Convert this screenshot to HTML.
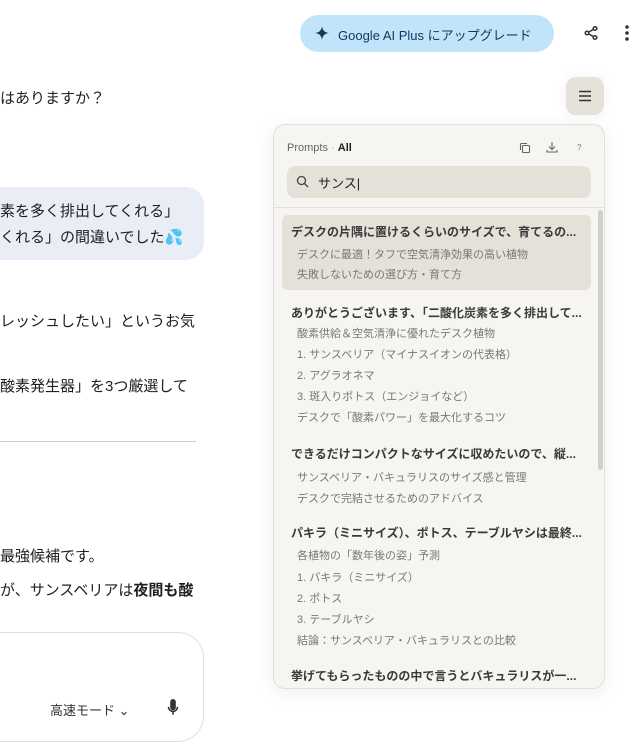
<!DOCTYPE html>
<html><head><meta charset="utf-8"><style>
*{margin:0;padding:0;box-sizing:border-box}
body{width:644px;height:721px;overflow:hidden;background:#fff;font-family:"Liberation Sans","Noto Sans CJK JP",sans-serif;color:#1f1f1f;position:relative}
.a{position:absolute;white-space:nowrap}
.t{font-size:15px;color:#1f1f1f}
.pt{font-size:12px;font-weight:bold;color:#3a3a3a;left:291px}
.ps{font-size:11px;color:#7a7872;left:297px}
</style></head><body>
<div class="a" style="left:300px;top:15px;width:254px;height:37px;border-radius:19px;background:#c2e4fb"></div>
<svg class="a" style="left:314px;top:25px" width="16" height="16" viewBox="0 0 16 16"><path d="M8 1 C8.6 5.5 10.5 7.4 15 8 C10.5 8.6 8.6 10.5 8 15 C7.4 10.5 5.5 8.6 1 8 C5.5 7.4 7.4 5.5 8 1Z" fill="#0b3a5c"/></svg>
<div class="a" style="left:338px;top:25px;font-size:13px;color:#0b3a5c">Google AI Plus にアップグレード</div>
<svg class="a" style="left:583px;top:25px" width="16" height="16" viewBox="0 0 16 16" fill="none" stroke="#333" stroke-width="1.5"><circle cx="12" cy="3.5" r="1.8"/><circle cx="4" cy="8" r="1.8"/><circle cx="12" cy="12.5" r="1.8"/><path d="M5.6 7.1 10.4 4.4M5.6 8.9 10.4 11.6"/></svg>
<svg class="a" style="left:623px;top:24px" width="8" height="18"><circle cx="4" cy="3" r="1.8" fill="#333"/><circle cx="4" cy="9" r="1.8" fill="#333"/><circle cx="4" cy="15" r="1.8" fill="#333"/></svg>

<div class="a t" style="left:0;top:87px">はありますか？</div>
<div class="a" style="left:-30px;top:187px;width:234px;height:73px;border-radius:0 18px 18px 18px;background:#e9eef6"></div>
<div class="a t" style="left:0;top:200px">素を多く排出してくれる」</div>
<div class="a t" style="left:0;top:226px">くれる」の間違いでした<span style="color:#4aa3e0">💦</span></div>
<div class="a t" style="left:0;top:310px">レッシュしたい」というお気</div>
<div class="a t" style="left:0;top:375px">酸素発生器」を3つ厳選して</div>
<div class="a" style="left:0;top:441px;width:196px;height:1px;background:#ccc"></div>
<div class="a t" style="left:0;top:545px">最強候補です。</div>
<div class="a t" style="left:0;top:579px">が、サンスベリアは<b>夜間も酸</b></div>
<div class="a" style="left:-30px;top:632px;width:234px;height:110px;border:1px solid #e0e0e0;border-radius:26px"></div>
<div class="a" style="left:50px;top:700px;font-size:13px;color:#333">高速モード ⌄</div>
<svg class="a" style="left:167px;top:699px" width="12" height="18" viewBox="0 0 10 16"><rect x="2.5" y="0" width="5" height="10" rx="2.5" fill="#333"/><path d="M1 7a4 4 0 0 0 8 0M5 11v3" stroke="#333" stroke-width="1.4" fill="none"/></svg>

<div class="a" style="left:566px;top:77px;width:38px;height:38px;border-radius:10px;background:#e5e2da;box-shadow:0 0 12px rgba(0,0,0,.06)"></div>
<svg class="a" style="left:578px;top:90px" width="14" height="12"><path d="M1 1.5h12M1 6h12M1 10.5h12" stroke="#333" stroke-width="1.6"/></svg>

<div class="a" style="left:273px;top:124px;width:332px;height:565px;border-radius:12px;background:#f6f5f2;border:1px solid #e2e0da;box-shadow:0 4px 20px rgba(0,0,0,.07)"></div>
<div class="a" style="left:287px;top:142px;font-size:11px;color:#666">Prompts <span style="color:#bbb">·</span> <b style="color:#222">All</b></div>
<svg class="a" style="left:519px;top:142px" width="12" height="12" fill="none" stroke="#666" stroke-width="1.1"><rect x="3.5" y="3.5" width="7" height="7" rx="1"/><path d="M1.5 8V2.5a1 1 0 0 1 1-1H8"/></svg>
<svg class="a" style="left:546px;top:141px" width="12" height="12" fill="none" stroke="#666" stroke-width="1.1"><path d="M6 1v7M3 5.5 6 8.5 9 5.5M1 9v2h10V9"/></svg>
<div class="a" style="left:577px;top:143px;font-size:8px;color:#777">?</div>
<div class="a" style="left:287px;top:166px;width:304px;height:32px;border-radius:8px;background:#e4e1d9"></div>
<svg class="a" style="left:296px;top:175px" width="13" height="13" fill="none" stroke="#444" stroke-width="1.3"><circle cx="5.5" cy="5.5" r="4"/><path d="M8.5 8.5 12 12"/></svg>
<div class="a" style="left:318px;top:173px;font-size:13px;color:#222">サンス<span style="font-weight:100">|</span></div>
<div class="a" style="left:274px;top:207px;width:330px;height:1px;background:#e2e0da"></div>
<div class="a" style="left:598px;top:210px;width:5px;height:260px;border-radius:3px;background:#d2d0cc"></div>
<div class="a" style="left:282px;top:215px;width:309px;height:75px;border-radius:6px;background:#e4e1d9"></div>

<div class="a pt" style="top:223px">デスクの片隅に置けるくらいのサイズで、育てるの...</div>
<div class="a ps" style="top:246px">デスクに最適！タフで空気清浄効果の高い植物</div>
<div class="a ps" style="top:266px">失敗しないための選び方・育て方</div>

<div class="a pt" style="top:304px">ありがとうございます、「二酸化炭素を多く排出して...</div>
<div class="a ps" style="top:325px">酸素供給＆空気清浄に優れたデスク植物</div>
<div class="a ps" style="top:346px">1. サンスベリア（マイナスイオンの代表格）</div>
<div class="a ps" style="top:367px">2. アグラオネマ</div>
<div class="a ps" style="top:388px">3. 斑入りポトス（エンジョイなど）</div>
<div class="a ps" style="top:409px">デスクで「酸素パワー」を最大化するコツ</div>

<div class="a pt" style="top:445px">できるだけコンパクトなサイズに収めたいので、縦...</div>
<div class="a ps" style="top:469px">サンスベリア・バキュラリスのサイズ感と管理</div>
<div class="a ps" style="top:490px">デスクで完結させるためのアドバイス</div>

<div class="a pt" style="top:524px">パキラ（ミニサイズ）、ポトス、テーブルヤシは最終...</div>
<div class="a ps" style="top:547px">各植物の「数年後の姿」予測</div>
<div class="a ps" style="top:569px">1. パキラ（ミニサイズ）</div>
<div class="a ps" style="top:590px">2. ポトス</div>
<div class="a ps" style="top:611px">3. テーブルヤシ</div>
<div class="a ps" style="top:632px">結論：サンスベリア・バキュラリスとの比較</div>

<div class="a pt" style="top:667px">挙げてもらったものの中で言うとバキュラリスが一...</div>
</body></html>
